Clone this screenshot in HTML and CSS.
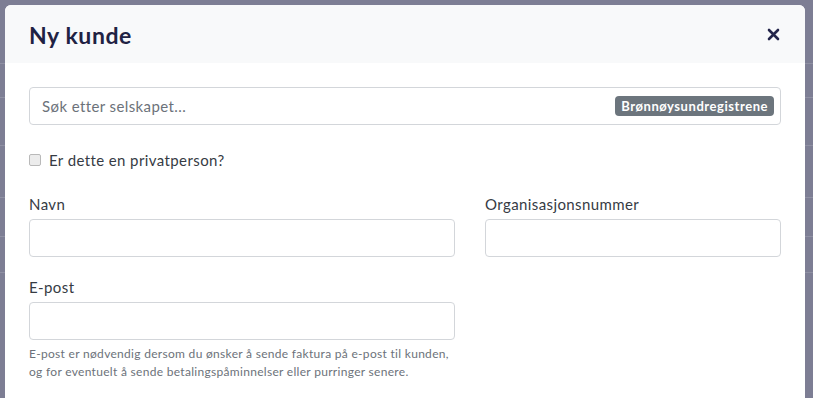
FILE: index.html
```html
<!DOCTYPE html>
<html lang="no">
<head>
    <meta charset="UTF-8">
    <meta name="viewport" content="width=device-width, initial-scale=1.0">
    <title>Ny kunde</title>
    <link rel="stylesheet" href="styles.css">
</head>
<body>
    <div class="backdrop">
        <div class="row-line" style="top: 63px"></div>
        <div class="row-line" style="top: 97px"></div>
        <div class="row-line" style="top: 145px"></div>
        <div class="row-line" style="top: 197px"></div>
        <div class="row-line" style="top: 236px"></div>
        <div class="row-line" style="top: 272px"></div>
    </div>

    <div class="modal">
        <div class="modal-header">
            <h1>Ny kunde</h1>
            <button class="close" aria-label="Lukk">
                <svg width="13" height="13" viewBox="0 0 13 13">
                    <path d="M2 2 L11 11 M11 2 L2 11" stroke="#23254a" stroke-width="2.6" stroke-linecap="round"/>
                </svg>
            </button>
        </div>

        <div class="modal-body">
            <div class="search">
                <input type="text" placeholder="Søk etter selskapet...">
                <span class="badge">Brønnøysundregistrene</span>
            </div>

            <label class="check">
                <input type="checkbox">
                <span>Er dette en privatperson?</span>
            </label>

            <div class="grid">
                <div class="field">
                    <label>Navn</label>
                    <input type="text">
                </div>
                <div class="field">
                    <label>Organisasjonsnummer</label>
                    <input type="text">
                </div>
                <div class="field">
                    <label>E-post</label>
                    <input type="text">
                    <small class="help">E-post er nødvendig dersom du ønsker å sende faktura på e-post til kunden, og for eventuelt å sende betalingspåminnelser eller purringer senere.</small>
                </div>
            </div>
        </div>
    </div>
</body>
</html>
```

FILE: styles.css
```css
body {
    margin: 0;
    font-family: 'Lato', 'Noto Sans', sans-serif;
    background-color: #7d7e94;
    color: #363b44;
    height: 398px;
    overflow: hidden;
    position: relative;
}

.backdrop {
    position: absolute;
    inset: 0;
}

.row-line {
    position: absolute;
    left: 0;
    right: 0;
    height: 1px;
    background-color: #8f90a3;
}

.modal {
    position: relative;
    margin: 5px 0 0 5px;
    width: 800px;
    height: 393px;
    background-color: #fff;
    border-radius: 6px 6px 0 0;
    overflow: hidden;
}

.modal-header {
    display: flex;
    align-items: center;
    justify-content: space-between;
    height: 58px;
    padding: 0 24px;
    background-color: #f8f9fa;
    box-sizing: border-box;
}

.modal-header h1 {
    margin: 0;
    font-size: 23px;
    font-weight: 700;
    letter-spacing: 0.6px;
    color: #1f2243;
    padding-top: 1px;
}

.close {
    border: none;
    background: none;
    padding: 0;
    margin-right: 1px;
    cursor: pointer;
    display: flex;
}

.modal-body {
    padding: 24px 24px 0 24px;
}

input[type="text"] {
    display: block;
    width: 100%;
    height: 38px;
    box-sizing: border-box;
    border: 1px solid #d3d6da;
    border-radius: 4px;
    padding: 6px 12px;
    font-family: inherit;
    font-size: 15px;
    letter-spacing: 0.4px;
    color: #363b44;
}

input::placeholder {
    color: #6c727a;
}

.search {
    position: relative;
}

.badge {
    position: absolute;
    right: 7px;
    top: 9px;
    background-color: #6c757d;
    color: #fff;
    font-size: 13px;
    font-weight: 700;
    letter-spacing: 0.55px;
    line-height: 20px;
    padding: 0 6px;
    border-radius: 4px;
}

.check {
    display: flex;
    align-items: center;
    gap: 8px;
    margin-top: 24px;
    font-size: 15px;
    letter-spacing: 0.4px;
    line-height: 22px;
}

.check input {
    appearance: none;
    margin: 0;
    width: 12px;
    height: 12px;
    background-color: #ececec;
    border: 1px solid #b9b9b9;
    border-radius: 2px;
    box-sizing: border-box;
}

.grid {
    display: grid;
    grid-template-columns: 426px 296px;
    column-gap: 30px;
    row-gap: 19px;
    margin-top: 22px;
}

.field label {
    display: block;
    font-size: 15px;
    letter-spacing: 0.4px;
    line-height: 22px;
    margin-bottom: 4px;
}

.help {
    display: block;
    margin-top: 5px;
    font-size: 12px;
    letter-spacing: 0.3px;
    line-height: 18px;
    color: #6c727a;
}
```
